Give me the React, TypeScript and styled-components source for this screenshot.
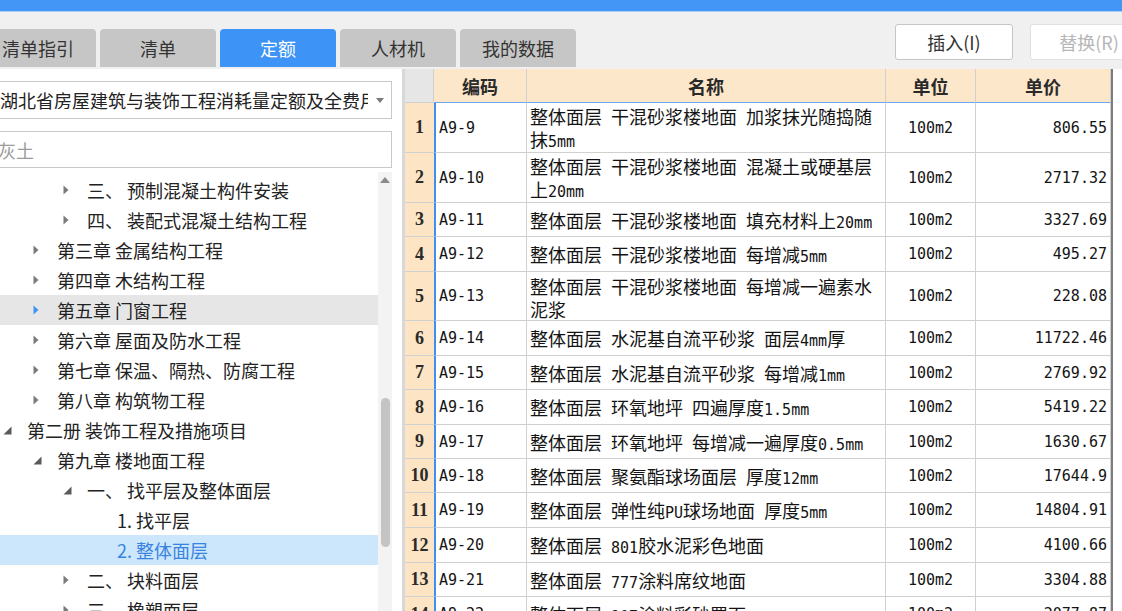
import React from "react";
import styled, { createGlobalStyle } from "styled-components";

const GlobalStyle = createGlobalStyle`
  html, body { margin: 0; padding: 0; background: #f0f0f0; overflow: hidden; }
  body { font-family: "Noto Sans CJK SC", "Noto Sans", sans-serif; color: #222; }
  * { box-sizing: border-box; }
`;

const CJK = `"Noto Sans CJK SC", "Noto Sans", sans-serif`;
const MONO = `"DejaVu Sans Mono", "Liberation Mono", monospace`;
const BLUE = "#3d94f6";

const Page = styled.div`
  width: 1122px;
  height: 611px;
  overflow: hidden;
  display: flex;
  flex-direction: column;
  background: #f0f0f0;
`;

const TitleBar = styled.div`
  height: 12px;
  flex-shrink: 0;
  background: #4395f6;
  border-bottom: 1px solid #a9cdf8;
`;

const Shell = styled.div`
  flex: 1;
  min-height: 0;
  margin-left: -20px;
  width: 1142px;
  display: flex;
  flex-direction: column;
`;

const TopRow = styled.div`
  height: 57px;
  flex-shrink: 0;
  display: flex;
  align-items: flex-start;
`;

const Tabs = styled.div`
  display: flex;
  gap: 4px;
  margin-top: 17px;
`;

const Tab = styled.div<{ $active?: boolean }>`
  width: 116px;
  height: 38px;
  border-radius: 4px 4px 0 0;
  background: ${(p) => (p.$active ? BLUE : "#c6c6c6")};
  color: ${(p) => (p.$active ? "#fff" : "#333")};
  font-family: ${CJK};
  font-size: 18px;
  display: flex;
  align-items: center;
  justify-content: center;
`;

const ButtonGroup = styled.div`
  display: flex;
  gap: 17px;
  margin-top: 12px;
  margin-left: 319px;
`;

const ActionButton = styled.div<{ $disabled?: boolean }>`
  width: 118px;
  height: 36px;
  background: #fff;
  border: 1px solid ${(p) => (p.$disabled ? "#e0e0e0" : "#c6c6c6")};
  border-radius: 3px;
  color: ${(p) => (p.$disabled ? "#b6b6b6" : "#333")};
  font-family: ${CJK};
  font-size: 18px;
  display: flex;
  align-items: center;
  justify-content: center;
`;

const Main = styled.div`
  flex: 1;
  min-height: 0;
  display: flex;
`;

const LeftPanel = styled.div`
  width: 422px;
  flex-shrink: 0;
  background: #fff;
  display: flex;
  flex-direction: column;
  overflow: hidden;
`;

const Select = styled.div`
  margin: 12px 10px 0 10px;
  height: 38px;
  flex-shrink: 0;
  border: 1px solid #c8c8c8;
  display: flex;
  align-items: center;
  padding-left: 9px;
`;

const SelectText = styled.div`
  flex: 1;
  overflow: hidden;
  white-space: nowrap;
  font-family: ${CJK};
  font-size: 18px;
  color: #222;
`;

const Caret = styled.div`
  width: 23px;
  display: flex;
  align-items: center;
  justify-content: center;
`;

const Search = styled.div`
  margin: 12px 10px 0 10px;
  height: 37px;
  flex-shrink: 0;
  border: 1px solid #c8c8c8;
  display: flex;
  align-items: center;
  padding-left: 7px;
  font-family: ${CJK};
  font-size: 18px;
  color: #9c9c9c;
`;

const TreeArea = styled.div`
  flex: 1;
  min-height: 0;
  margin-top: 4px;
  display: flex;
  padding-right: 10px;
`;

const TreeList = styled.div`
  flex: 1;
  overflow: hidden;
  padding-top: 3px;
`;

const TreeRow = styled.div<{ $level: number; $state?: "hover" | "selected" }>`
  height: 30px;
  display: flex;
  align-items: center;
  padding-left: ${(p) => 20 + p.$level * 30}px;
  background: ${(p) =>
    p.$state === "hover" ? "#e6e6e6" : p.$state === "selected" ? "#cce6fc" : "transparent"};
  color: ${(p) => (p.$state === "selected" ? "#3a84e0" : "#222")};
`;

const ArrowBox = styled.div`
  width: 27px;
  flex-shrink: 0;
  display: flex;
  align-items: center;
  padding-left: 3px;
`;

const TreeLabel = styled.span`
  font-family: ${CJK};
  font-size: 18px;
  white-space: nowrap;
`;

const Scrollbar = styled.div`
  width: 14px;
  flex-shrink: 0;
  background: #f3f3f3;
  display: flex;
  flex-direction: column;
  align-items: center;
`;

const ScrollArrow = styled.div`
  margin-top: 5px;
  height: 6px;
  display: flex;
`;

const ScrollThumb = styled.div`
  margin-top: 215px;
  width: 9px;
  height: 149px;
  border-radius: 5px;
  background: #c4c4c4;
`;

const Splitter = styled.div`
  width: 3px;
  flex-shrink: 0;
  background: #d8d8d8;
`;

const TableArea = styled.div`
  flex: 1;
  background: #fff;
  display: flex;
  overflow: hidden;
`;

const Grid = styled.div`
  width: 708px;
  flex-shrink: 0;
  border-right: 2px solid #7c7c7c;
  display: flex;
  flex-direction: column;
`;

const COLS = "29px 93px 359px 90px 135px";

const HeaderRow = styled.div`
  display: grid;
  grid-template-columns: ${COLS};
  height: 34px;
  flex-shrink: 0;
`;

const HeadCell = styled.div<{ $corner?: boolean }>`
  background: ${(p) => (p.$corner ? "#e6e6e6" : "#fde7ca")};
  border-right: 1px solid #d0d0d0;
  border-bottom: 1px solid ${(p) => (p.$corner ? "#d0d0d0" : "#6aa8f4")};
  font-family: ${CJK};
  font-weight: 700;
  font-size: 18px;
  color: #2a2a2a;
  display: flex;
  align-items: center;
  justify-content: center;
`;

const BodyRow = styled.div<{ $h: number }>`
  display: grid;
  grid-template-columns: ${COLS};
  height: ${(p) => p.$h}px;
  flex-shrink: 0;
`;

const Cell = styled.div`
  border-right: 1px solid #d0d0d0;
  border-bottom: 1px solid #d0d0d0;
  display: flex;
  align-items: center;
  color: #141414;
  overflow: hidden;
`;

const RowHead = styled(Cell)`
  background: #fce4c4;
  border-right: none;
  justify-content: center;
  font-family: "Liberation Serif", serif;
  font-weight: 700;
  font-size: 18px;
  color: #2a2a2a;
`;

const CodeCell = styled(Cell)`
  border-left: 2px solid #3f8ff0;
  padding-left: 3px;
  font-family: ${MONO};
  font-size: 15px;
`;

const NameCell = styled(Cell)`
  padding: 0 2px 0 3px;
  font-family: ${CJK};
  font-size: 18px;
  line-height: 20px;
  padding-top: 3px;
`;

const NameText = styled.div`
  width: 100%;
`;

const Ascii = styled.span`
  font-family: ${MONO};
  font-size: 15px;
  white-space: pre-wrap;
`;

const UnitCell = styled(Cell)`
  justify-content: center;
  font-family: ${MONO};
  font-size: 15px;
`;

const PriceCell = styled(Cell)`
  justify-content: flex-end;
  padding-right: 3px;
  font-family: ${MONO};
  font-size: 15px;
`;

const Mixed: React.FC<{ text: string }> = ({ text }) => {
  const parts = text.split(/([ -~]+)/).filter((s) => s.length > 0);
  return (
    <>
      {parts.map((p, i) => (/^[ -~]+$/.test(p) ? <Ascii key={i}>{p}</Ascii> : <React.Fragment key={i}>{p}</React.Fragment>))}
    </>
  );
};

const CollapsedArrow: React.FC<{ color?: string }> = ({ color = "#7a7a7a" }) => (
  <svg width="6" height="10" viewBox="0 0 6 10">
    <path d="M0.5 0.5 L5.5 5 L0.5 9.5 Z" fill={color} />
  </svg>
);

const ExpandedArrow: React.FC = () => (
  <svg width="9" height="9" viewBox="0 0 9 9">
    <path d="M8.5 0.5 L8.5 8.5 L0.5 8.5 Z" fill="#5a5a5a" />
  </svg>
);

type TreeItem = { l: number; t: string; a?: "c" | "e"; s?: "hover" | "selected" };

const tree: TreeItem[] = [
  { l: 2, t: "三、 预制混凝土构件安装", a: "c" },
  { l: 2, t: "四、 装配式混凝土结构工程", a: "c" },
  { l: 1, t: "第三章 金属结构工程", a: "c" },
  { l: 1, t: "第四章 木结构工程", a: "c" },
  { l: 1, t: "第五章 门窗工程", a: "c", s: "hover" },
  { l: 1, t: "第六章 屋面及防水工程", a: "c" },
  { l: 1, t: "第七章 保温、隔热、防腐工程", a: "c" },
  { l: 1, t: "第八章 构筑物工程", a: "c" },
  { l: 0, t: "第二册 装饰工程及措施项目", a: "e" },
  { l: 1, t: "第九章 楼地面工程", a: "e" },
  { l: 2, t: "一、 找平层及整体面层", a: "e" },
  { l: 3, t: "1. 找平层" },
  { l: 3, t: "2. 整体面层", s: "selected" },
  { l: 2, t: "二、 块料面层", a: "c" },
  { l: 2, t: "三、 橡塑面层", a: "c" },
];

type Row = { code: string; name: string; unit: string; price: string; h: number };

const rows: Row[] = [
  { code: "A9-9", name: "整体面层 干混砂浆楼地面 加浆抹光随捣随抹5mm", unit: "100m2", price: "806.55", h: 50 },
  { code: "A9-10", name: "整体面层 干混砂浆楼地面 混凝土或硬基层上20mm", unit: "100m2", price: "2717.32", h: 50 },
  { code: "A9-11", name: "整体面层 干混砂浆楼地面 填充材料上20mm", unit: "100m2", price: "3327.69", h: 34 },
  { code: "A9-12", name: "整体面层 干混砂浆楼地面 每增减5mm", unit: "100m2", price: "495.27", h: 35 },
  { code: "A9-13", name: "整体面层 干混砂浆楼地面 每增减一遍素水泥浆", unit: "100m2", price: "228.08", h: 49 },
  { code: "A9-14", name: "整体面层 水泥基自流平砂浆 面层4mm厚", unit: "100m2", price: "11722.46", h: 35 },
  { code: "A9-15", name: "整体面层 水泥基自流平砂浆 每增减1mm", unit: "100m2", price: "2769.92", h: 34 },
  { code: "A9-16", name: "整体面层 环氧地坪 四遍厚度1.5mm", unit: "100m2", price: "5419.22", h: 35 },
  { code: "A9-17", name: "整体面层 环氧地坪 每增减一遍厚度0.5mm", unit: "100m2", price: "1630.67", h: 34 },
  { code: "A9-18", name: "整体面层 聚氨酯球场面层 厚度12mm", unit: "100m2", price: "17644.9", h: 34 },
  { code: "A9-19", name: "整体面层 弹性纯PU球场地面 厚度5mm", unit: "100m2", price: "14804.91", h: 35 },
  { code: "A9-20", name: "整体面层 801胶水泥彩色地面", unit: "100m2", price: "4100.66", h: 35 },
  { code: "A9-21", name: "整体面层 777涂料席纹地面", unit: "100m2", price: "3304.88", h: 34 },
  { code: "A9-22", name: "整体面层 107涂料彩砂罩面", unit: "100m2", price: "2077.87", h: 35 },
];

export default function App() {
  return (
    <Page>
      <GlobalStyle />
      <TitleBar />
      <Shell>
        <TopRow>
          <Tabs>
            <Tab>清单指引</Tab>
            <Tab>清单</Tab>
            <Tab $active>定额</Tab>
            <Tab>人材机</Tab>
            <Tab>我的数据</Tab>
          </Tabs>
          <ButtonGroup>
            <ActionButton>插入(I)</ActionButton>
            <ActionButton $disabled>替换(R)</ActionButton>
          </ButtonGroup>
        </TopRow>
        <Main>
          <LeftPanel>
            <Select>
              <SelectText>湖北省房屋建筑与装饰工程消耗量定额及全费用基价表(2018)</SelectText>
              <Caret>
                <svg width="8" height="5" viewBox="0 0 8 5">
                  <path d="M0 0 L8 0 L4 5 Z" fill="#7a7a7a" />
                </svg>
              </Caret>
            </Select>
            <Search>灰土</Search>
            <TreeArea>
              <TreeList>
                {tree.map((it, i) => (
                  <TreeRow key={i} $level={it.l} $state={it.s}>
                    <ArrowBox>
                      {it.a === "c" && <CollapsedArrow color={it.s === "hover" ? BLUE : undefined} />}
                      {it.a === "e" && <ExpandedArrow />}
                    </ArrowBox>
                    <TreeLabel>{it.t}</TreeLabel>
                  </TreeRow>
                ))}
              </TreeList>
              <Scrollbar>
                <ScrollArrow>
                  <svg width="10" height="6" viewBox="0 0 10 6">
                    <path d="M0 6 L5 0 L10 6 Z" fill="#8a8a8a" />
                  </svg>
                </ScrollArrow>
                <ScrollThumb />
              </Scrollbar>
            </TreeArea>
          </LeftPanel>
          <Splitter />
          <TableArea>
            <Grid>
              <HeaderRow>
                <HeadCell $corner />
                <HeadCell>编码</HeadCell>
                <HeadCell>名称</HeadCell>
                <HeadCell>单位</HeadCell>
                <HeadCell>单价</HeadCell>
              </HeaderRow>
              {rows.map((r, i) => (
                <BodyRow key={r.code} $h={r.h}>
                  <RowHead>{i + 1}</RowHead>
                  <CodeCell>{r.code}</CodeCell>
                  <NameCell>
                    <NameText>
                      <Mixed text={r.name} />
                    </NameText>
                  </NameCell>
                  <UnitCell>{r.unit}</UnitCell>
                  <PriceCell>{r.price}</PriceCell>
                </BodyRow>
              ))}
            </Grid>
          </TableArea>
        </Main>
      </Shell>
    </Page>
  );
}
